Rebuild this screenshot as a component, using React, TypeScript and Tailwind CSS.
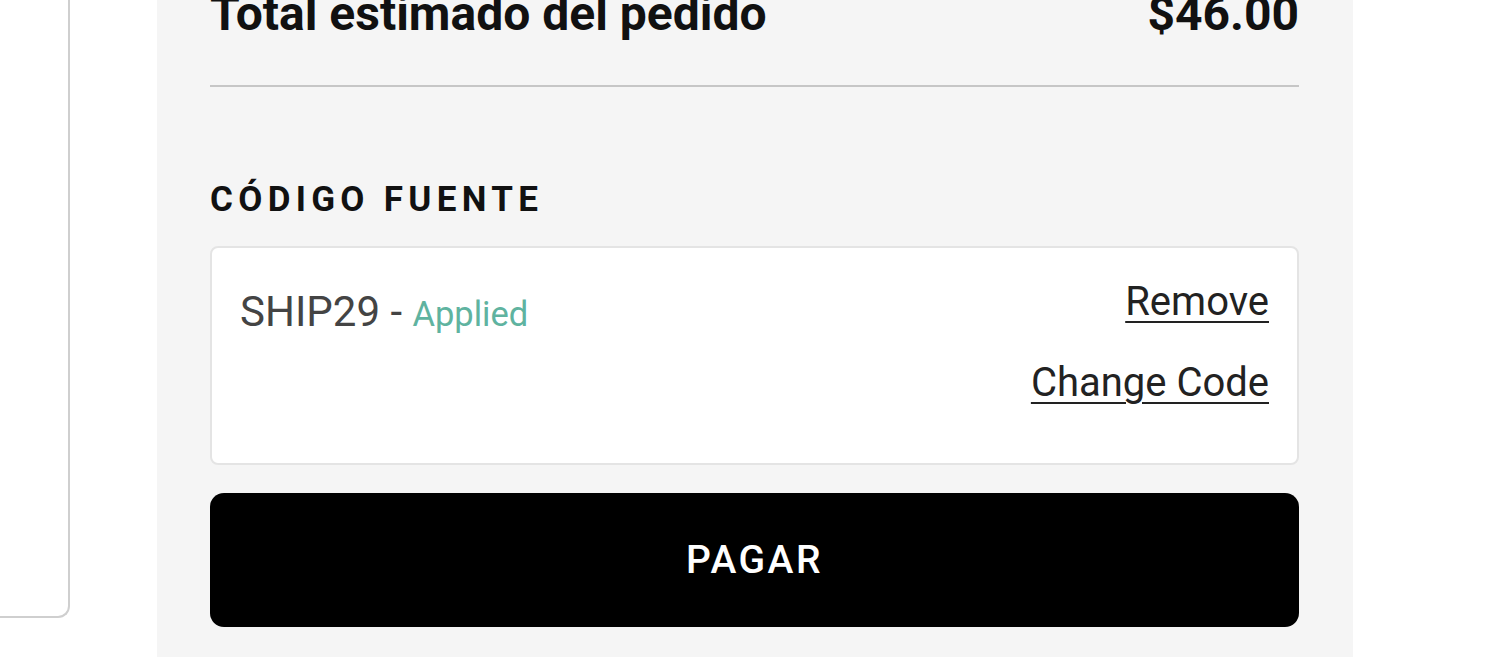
import React from 'react'

export default function App() {
  return (
    <div className="flex min-h-[657px] w-[1500px] overflow-hidden bg-white font-['Roboto',sans-serif]">
      {/* left card edge */}
      <div className="w-[157px] shrink-0">
        <div className="h-[618px] w-[70px] rounded-br-[12px] border-r-2 border-b-2 border-[#cfcfcf] bg-white" />
      </div>

      {/* order summary panel */}
      <div className="h-[657px] w-[1196px] shrink-0 bg-[#f5f5f5] pl-[53px] pr-[54px]">
        <div className="-mt-[14px] flex items-start justify-between text-[48px] leading-[56px] font-bold text-[#111]">
          <span>Total estimado del pedido</span>
          <span>$46.00</span>
        </div>

        <div className="mt-[43px] h-[2px] bg-[#c6c6c6]" />

        <h3 className="mt-[92px] text-[35px] leading-[42px] font-bold tracking-[5.3px] text-[#111]">
          CÓDIGO FUENTE
        </h3>

        <div className="mt-[25px] flex justify-between rounded-[8px] border-2 border-[#e4e4e4] bg-white pt-[30px] pr-[28px] pb-[56px] pl-[28px]">
          <div className="mt-[10px] text-[42px] leading-[48px] text-[#444]">
            SHIP29 - <span className="text-[34.5px] text-[#5fb3a0]">Applied</span>
          </div>
          <div className="flex flex-col items-end gap-[33px] text-[40px] leading-[48px] text-[#222]">
            <a href="#" className="underline decoration-2 underline-offset-[6px]">Remove</a>
            <a href="#" className="underline decoration-2 underline-offset-[6px]">Change Code</a>
          </div>
        </div>

        <button className="mt-[28px] flex h-[134px] w-full items-center justify-center rounded-[14px] bg-black text-[39px] font-medium tracking-[2.5px] text-white">
          PAGAR
        </button>
      </div>
    </div>
  )
}
